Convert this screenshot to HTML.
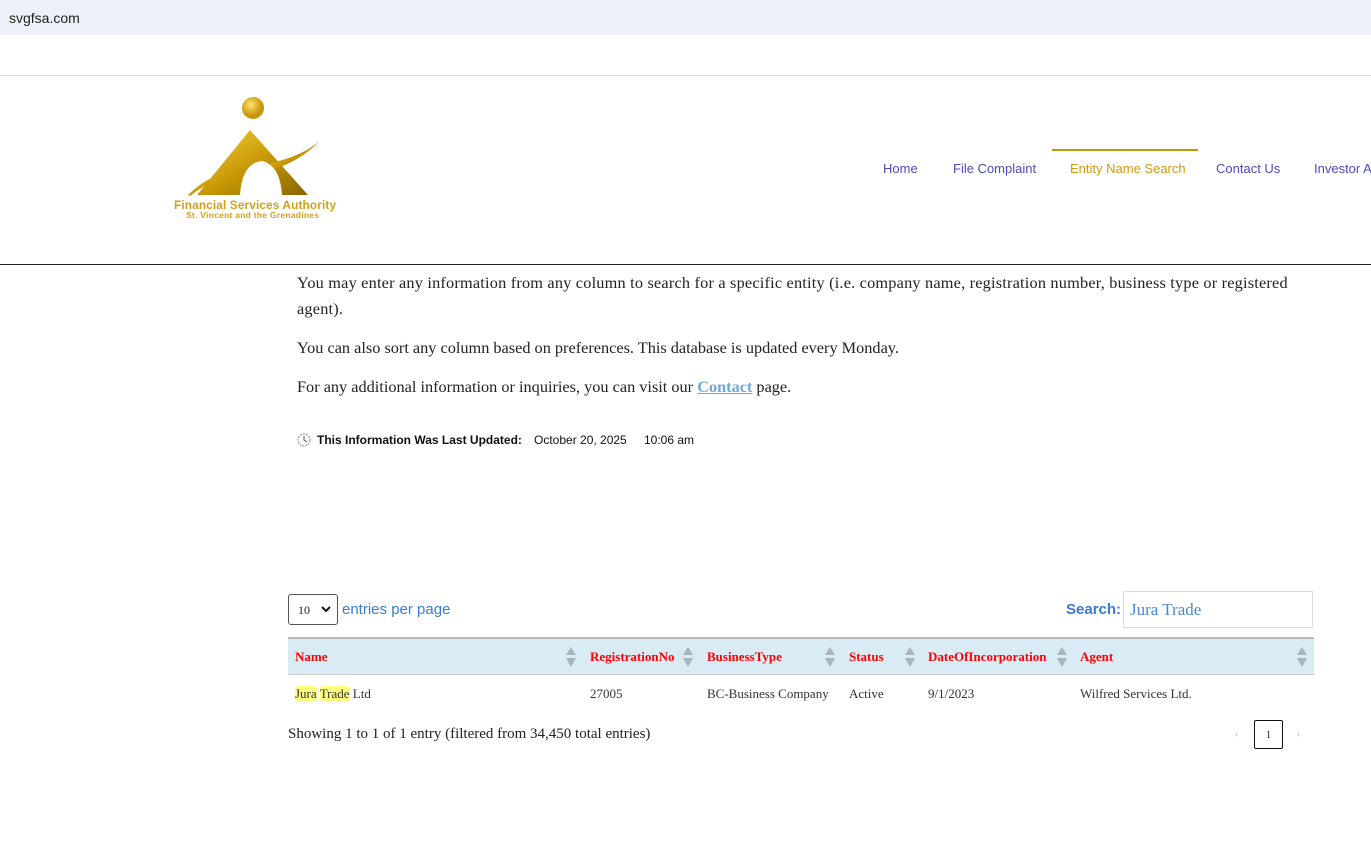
<!DOCTYPE html>
<html><head><meta charset="utf-8"><style>
*{margin:0;padding:0;box-sizing:border-box}
body{width:1371px;height:865px;overflow:hidden;background:#fff;position:relative;font-family:"Liberation Serif",serif;color:#222}
.abs{position:absolute}
.sans{font-family:"Liberation Sans",sans-serif}
.nav a{position:absolute;top:161px;font-family:"Liberation Sans",sans-serif;font-size:13px;color:#4a49c8;text-decoration:none;white-space:nowrap}
p.t{position:absolute;left:297px;font-size:16.3px;color:#222;line-height:26px;width:1000px}
.hdr{position:absolute;top:637px;left:288px;width:1026px;height:38px;background:#d9ebf5;border-top:2px solid #bbb;border-bottom:1px solid #ccc}
.h{position:absolute;top:649px;color:#f00;font-weight:bold;font-size:13px}
.s{position:absolute;top:646px;width:10px;height:22px}
.c{position:absolute;top:686px;font-size:13px;color:#333}
.hl{background:#ffff80;border-radius:3px}
</style></head><body>
<div class="abs sans" style="left:0;top:0;width:1371px;height:35px;background:#edf1f9;font-size:14px;color:#222;padding:10px 0 0 9px">svgfsa.com</div>
<div class="abs" style="left:0;top:75px;width:1371px;height:1px;background:#ddd"></div>
<div class="abs" style="left:0;top:264px;width:1371px;height:1px;background:#222"></div>
<svg class="abs" style="left:170px;top:95px" width="175" height="130" viewBox="0 0 175 130">
<defs><linearGradient id="g" x1="0" y1="0" x2="1" y2="1"><stop offset="0" stop-color="#f5d142"/><stop offset=".5" stop-color="#c99a06"/><stop offset="1" stop-color="#8a6500"/></linearGradient>
<radialGradient id="r" cx=".4" cy=".35"><stop offset="0" stop-color="#ffe46a"/><stop offset="1" stop-color="#c8960a"/></radialGradient></defs>
<circle cx="83" cy="13" r="11" fill="url(#r)"/>
<path d="M27 100 L80 35 L138 100 L112 100 Q110 70 92 66 Q72 68 70 100 Z" fill="url(#g)"/>
<path d="M18 100 Q40 78 74 72 Q45 82 20 101Z" fill="url(#g)"/>
<path d="M100 68 Q130 62 150 46 Q130 66 104 74Z" fill="url(#g)"/>
<text x="4" y="114" font-family="Liberation Sans" font-size="11.8" fill="#d4a017" font-weight="bold" textLength="162">Financial Services Authority</text>
<text x="16" y="123" font-family="Liberation Sans" font-size="8.5" fill="#d4a017" font-weight="bold" textLength="133">St. Vincent and the Grenadines</text>
</svg>
<div class="nav">
<a style="left:883px">Home</a>
<a style="left:953px">File Complaint</a>
<a style="left:1070px;color:#d19a0c">Entity Name Search</a>
<a style="left:1216px">Contact Us</a>
<a style="left:1314px">Investor A</a>
</div>
<div class="abs" style="left:1052px;top:149px;width:146px;height:2px;background:#c8950a"></div>
<p class="t" style="top:270px;width:1010px;letter-spacing:0.2px">You may enter any information from any column to search for a specific entity (i.e. company name, registration number, business type or registered agent).</p>
<p class="t" style="top:335px">You can also sort any column based on preferences. This database is updated every Monday.</p>
<p class="t" style="top:374px">For any additional information or inquiries, you can visit our <a style="color:#6fa8dc;font-weight:bold;text-decoration:underline">Contact</a> page.</p>
<svg class="abs" style="left:297px;top:433px" width="14" height="14"><circle cx="7" cy="7" r="6" fill="none" stroke="#888" stroke-dasharray="2 1"/><path d="M7 3v4l3 2" stroke="#555" fill="none"/></svg>
<div class="abs sans" style="left:317px;top:433px;font-size:12px;font-weight:bold;color:#111">This Information Was Last Updated:</div>
<div class="abs sans" style="left:534px;top:433px;font-size:12px;color:#111">October 20, 2025</div>
<div class="abs sans" style="left:644px;top:433px;font-size:12px;color:#111">10:06 am</div>
<div class="abs" style="left:288px;top:594px;width:50px;height:31px;border:1px solid #555;border-radius:3px;font-size:12px;padding:8px 0 0 9px">10<svg style="position:absolute;right:6px;top:11px" width="10" height="7"><path d="M1 1l4 4 4-4" stroke="#111" stroke-width="2" fill="none"/></svg></div>
<div class="abs sans" style="left:342px;top:601px;font-size:15px;color:#3a7bd5">entries per page</div>
<div class="abs sans" style="left:1066px;top:601px;font-size:15px;color:#3a7bd5;font-weight:bold">Search:</div>
<div class="abs" style="left:1123px;top:591px;width:190px;height:37px;border:1px solid #ddd;font-size:17px;color:#4a88d8;padding:8px 0 0 6px">Jura Trade</div>
<div class="hdr"></div>
<div class="h" style="left:295px">Name</div>
<div class="h" style="left:590px">RegistrationNo</div>
<div class="h" style="left:707px">BusinessType</div>
<div class="h" style="left:849px">Status</div>
<div class="h" style="left:928px">DateOfIncorporation</div>
<div class="h" style="left:1080px">Agent</div>
<svg width="0" height="0" style="position:absolute"><defs><g id="ar"><path d="M5 1L10 9H0Z M5 21L10 12H0Z" fill="#a8b4bc"/></g></defs></svg>
<svg class="s" style="left:566px"><use href="#ar"/></svg>
<svg class="s" style="left:683px"><use href="#ar"/></svg>
<svg class="s" style="left:825px"><use href="#ar"/></svg>
<svg class="s" style="left:905px"><use href="#ar"/></svg>
<svg class="s" style="left:1057px"><use href="#ar"/></svg>
<svg class="s" style="left:1297px"><use href="#ar"/></svg>
<div class="c" style="left:295px"><span class="hl">Jura</span> <span class="hl">Trade</span> Ltd</div>
<div class="c" style="left:590px">27005</div>
<div class="c" style="left:707px">BC-Business Company</div>
<div class="c" style="left:849px">Active</div>
<div class="c" style="left:928px">9/1/2023</div>
<div class="c" style="left:1080px">Wilfred Services Ltd.</div>
<div class="abs" style="left:288px;top:726px;font-size:15px;color:#222">Showing 1 to 1 of 1 entry (filtered from 34,450 total entries)</div>
<div class="abs" style="left:1235px;top:729px;font-size:10px;color:#bbb">&lsaquo;</div>
<div class="abs" style="left:1254px;top:720px;width:29px;height:29px;border:1px solid #111;border-radius:2px;font-size:11px;text-align:center;line-height:29px">1</div>
<div class="abs" style="left:1297px;top:729px;font-size:10px;color:#bbb">&rsaquo;</div>
</body></html>
